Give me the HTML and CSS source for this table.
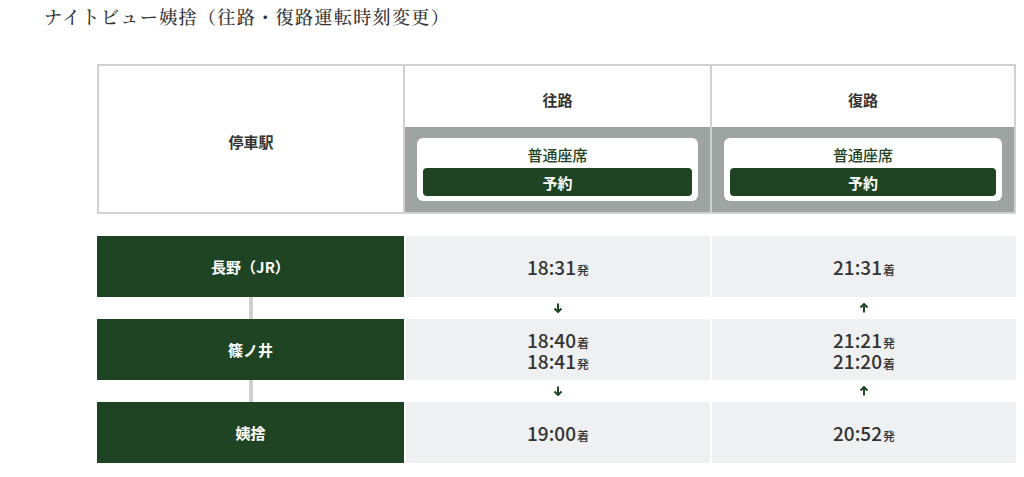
FILE: index.html
```html
<!DOCTYPE html>
<html lang="ja">
<head>
<meta charset="utf-8">
<link rel="stylesheet" href="styles.css">
</head>
<body>
<h2 class="title">ナイトビュー姨捨（往路・復路運転時刻変更）</h2>
<div class="timetable">
  <div class="head">
    <div class="head-station">停車駅</div>
    <div class="head-dir">往路</div>
    <div class="head-dir">復路</div>
    <div class="band">
      <div class="card">
        <div class="seat">普通座席</div>
        <div class="btn">予約</div>
      </div>
    </div>
    <div class="band">
      <div class="card">
        <div class="seat">普通座席</div>
        <div class="btn">予約</div>
      </div>
    </div>
  </div>

  <div class="body">
    <div class="row">
      <div class="station">長野（JR）</div>
      <div class="time"><span class="t">18:31<small>発</small></span></div>
      <div class="time"><span class="t">21:31<small>着</small></span></div>
    </div>
    <div class="link">
      <div class="line"><span></span></div>
      <div class="arrow"><svg width="10" height="10" viewBox="0 0 10 10"><path d="M5 0.5V9M1.5 5.5L5 9L8.5 5.5" fill="none" stroke="#1f4423" stroke-width="2"/></svg></div>
      <div class="arrow"><svg width="10" height="10" viewBox="0 0 10 10"><path d="M5 9.5V1M1.5 4.5L5 1L8.5 4.5" fill="none" stroke="#1f4423" stroke-width="2"/></svg></div>
    </div>
    <div class="row">
      <div class="station">篠ノ井</div>
      <div class="time"><span class="t">18:40<small>着</small></span><span class="t">18:41<small>発</small></span></div>
      <div class="time"><span class="t">21:21<small>発</small></span><span class="t">21:20<small>着</small></span></div>
    </div>
    <div class="link">
      <div class="line"><span></span></div>
      <div class="arrow"><svg width="10" height="10" viewBox="0 0 10 10"><path d="M5 0.5V9M1.5 5.5L5 9L8.5 5.5" fill="none" stroke="#1f4423" stroke-width="2"/></svg></div>
      <div class="arrow"><svg width="10" height="10" viewBox="0 0 10 10"><path d="M5 9.5V1M1.5 4.5L5 1L8.5 4.5" fill="none" stroke="#1f4423" stroke-width="2"/></svg></div>
    </div>
    <div class="row">
      <div class="station">姨捨</div>
      <div class="time"><span class="t">19:00<small>着</small></span></div>
      <div class="time"><span class="t">20:52<small>発</small></span></div>
    </div>
  </div>
</div>
</body>
</html>
```

FILE: styles.css
```css
* { box-sizing: border-box; }
html, body { margin: 0; padding: 0; background: #fff; }
body {
  font-family: "Noto Sans CJK JP", sans-serif;
  color: #333;
  width: 1024px;
}
.title {
  margin: 0;
  padding: 3px 0 0 44px;
  height: 30px;
  font-family: "Noto Serif CJK JP", "Liberation Serif", "Noto Sans CJK JP", serif;
  font-weight: 500;
  font-size: 18px;
  line-height: 26px;
  letter-spacing: 1.4px;
  color: #333;
}
.timetable {
  margin: 34px 0 0 97px;
  width: 919px;
}
.head {
  display: grid;
  grid-template-columns: 304px 305px 1fr;
  grid-template-rows: 61px 85px;
  column-gap: 2px;
  padding: 2px;
  background: #d0d2d2;
}
.head-station {
  grid-row: 1 / span 2;
  background: #fff;
  display: flex;
  align-items: center;
  justify-content: center;
  padding-top: 4px;
  font-weight: 700;
  font-size: 15px;
}
.head-dir {
  background: #fff;
  display: flex;
  align-items: center;
  justify-content: center;
  padding-top: 5px;
  font-weight: 700;
  font-size: 15px;
}
.band {
  background: #9ea4a2;
  padding: 11px 12px;
}
.card {
  background: #fff;
  border-radius: 6px;
  padding: 6px 6px 5px;
  height: 63px;
}
.seat {
  text-align: center;
  color: #1f4423;
  font-size: 15px;
  font-weight: 500;
  line-height: 22px;
  margin-bottom: 2px;
}
.btn {
  background: #1f4423;
  border-radius: 4px;
  height: 28px;
  padding-top: 3px;
  color: #fff;
  text-align: center;
  font-weight: 700;
  font-size: 15px;
  line-height: 24px;
}
.body {
  margin-top: 22px;
}
.row, .link {
  display: grid;
  grid-template-columns: 307px 304px 1fr;
  column-gap: 2px;
}
.row { height: 61px; }
.link { height: 22px; }
.station {
  background: #1f4423;
  color: #fff;
  font-weight: 700;
  font-size: 15px;
  display: flex;
  align-items: center;
  justify-content: center;
}
.time {
  background: #eef0f1;
  display: flex;
  flex-direction: column;
  align-items: center;
  justify-content: center;
}
.t {
  display: block;
  height: 21px;
  font-size: 19px;
  font-weight: 500;
  line-height: 21px;
  color: #333;
  white-space: nowrap;
}
.t small {
  font-size: 12px;
  font-weight: 500;
  margin-left: 1px;
}
.line {
  display: flex;
  justify-content: center;
}
.line span {
  width: 4px;
  background: #cfd1d1;
}
.arrow {
  display: flex;
  align-items: center;
  justify-content: center;
}
.arrow svg { display: block; }
```
